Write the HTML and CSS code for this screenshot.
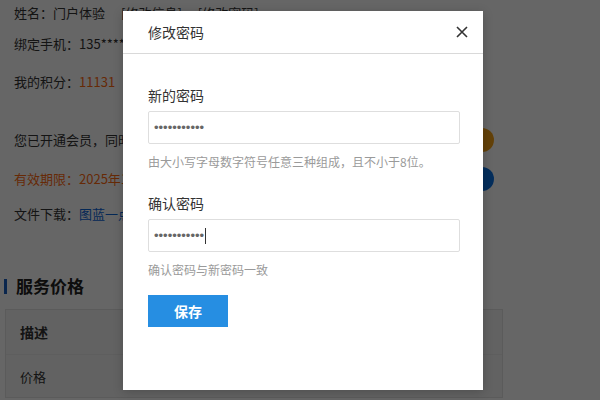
FILE: index.html
```html
<!DOCTYPE html>
<html lang="zh-CN">
<head>
<meta charset="utf-8">
<title>修改密码</title>
<link rel="stylesheet" href="styles.css">
</head>
<body>
<div class="page">
  <div class="info">
    <div class="row r1"><span>姓名：门户体验</span><span class="ops"><a>[修改信息]</a><a>[修改密码]</a></span></div>
    <div class="row r2">绑定手机：135****8866</div>
    <div class="row r3">我的积分：<span class="orange">11131</span></div>
    <div class="row r4 split"><span>您已开通会员，同时</span><span class="pill pill-orange">立即续费</span></div>
    <div class="row r5 split"><span class="orange">有效期限：2025年12</span><span class="pill pill-blue">查看权益</span></div>
    <div class="row r6">文件下载：<a class="link">图蓝一点</a></div>
  </div>
  <h2 class="sec-title">服务价格</h2>
  <div class="table">
    <div class="trow thead"><span>描述</span></div>
    <div class="trow tbody"><span>价格</span></div>
  </div>
</div>

<div class="mask"></div>
<div class="modal">
  <div class="modal-head">
    <span class="modal-title">修改密码</span>
    <svg class="close" width="12" height="12" viewBox="0 0 12 12"><path d="M1 1L11 11M11 1L1 11" stroke="#333" stroke-width="1.6" fill="none"/></svg>
  </div>
  <div class="modal-body">
    <div class="label">新的密码</div>
    <input class="field" type="password" value="12345678901">
    <div class="hint">由大小写字母数字符号任意三种组成，且不小于8位。</div>
    <div class="label label2">确认密码</div>
    <div class="field-wrap"><input class="field" type="password" value="12345678901"><span class="caret"></span></div>
    <div class="hint">确认密码与新密码一致</div>
    <button class="save">保存</button>
  </div>
</div>
</body>
</html>
```
FILE: styles.css
```css
* { box-sizing: border-box; }
html, body { margin: 0; padding: 0; }
body {
  width: 600px; height: 400px; overflow: hidden;
  background: #fff;
  font-family: "Noto Sans CJK SC", "Noto Sans", sans-serif;
  color: #333;
  position: relative;
}
.page { padding-left: 4px; width: 503px; }
.info { padding: 0 9px 0 10px; font-size: 13px; }
.row { line-height: 26px; height: 26px; display: flex; align-items: center; white-space: nowrap; }
.r2 { margin-top: 5px; }
.r3 { margin-top: 12px; }
.r4 { margin-top: 32px; }
.r5 { margin-top: 13px; }
.r6 { margin-top: 9px; }
.split { justify-content: space-between; }
.ops { margin-left: 16px; }
.ops a { margin-right: 16px; color: #333; }
.orange { color: #ff6a10; }
.link { color: #0a64d8; }
.pill { height: 24px; line-height: 24px; padding: 0 18px; border-radius: 12px; color: #fff; font-size: 12px; }
.pill-orange { background: #f7a417; }
.pill-blue { background: #0c74e6; }
.sec-title {
  margin: 46px 0 0; height: 26px; line-height: 26px;
  font-size: 17px; font-weight: bold; color: #222;
  display: flex; align-items: center;
}
.sec-title::before {
  content: ""; width: 3px; height: 15px; background: #1a5fc0; margin-right: 9px;
}
.table {
  margin: 10px 0 0 1px; width: 498px; border: 1px solid #e3e3e3; background: #f6f6f4;
}
.trow { padding-left: 14px; display: flex; align-items: center; font-size: 13px; }
.thead { font-size: 14px; font-weight: bold; border-bottom: 1px solid #ececec; height: 45px; }
.tbody { height: 42px; }
.mask { position: absolute; inset: 0; background: rgba(0,0,0,0.6); }
.modal {
  position: absolute; left: 123px; top: 11px; width: 360px; height: 379px;
  background: #fff; box-shadow: 0 2px 10px rgba(0,0,0,0.2);
}
.modal-head {
  height: 43px; border-bottom: 1px solid #d9d9d9;
  display: flex; align-items: center; justify-content: space-between;
  padding: 0 15px 0 25px;
}
.modal-title { font-size: 14px; color: #333; }
.close { display: block; }
.modal-body { padding: 31px 23px 0 25px; }
.label { font-size: 14px; line-height: 20px; height: 20px; color: #333; }
.label2 { margin-top: 22px; }
.field-wrap { position: relative; margin-top: 6px; }
.field-wrap .field { margin-top: 0; }
.field {
  display: block; margin-top: 6px; width: 312px; height: 33px;
  border: 1px solid #dedede; border-radius: 2px; padding: 0 5px;
  font-family: "Liberation Sans", sans-serif; font-size: 13px; color: #666;
  outline: none; background: #fff;
}
.caret { position: absolute; left: 57px; top: 9px; width: 1px; height: 16px; background: #333; }
.hint { margin-top: 9px; font-size: 12px; line-height: 18px; height: 18px; color: #9a9a9a; }
.save {
  display: block; margin-top: 16px; width: 80px; height: 32px; border: 0;
  background: #268ee2; color: #fff; font-size: 14px; font-weight: bold;
  font-family: "Noto Sans CJK SC", sans-serif; padding: 0;
}
```
